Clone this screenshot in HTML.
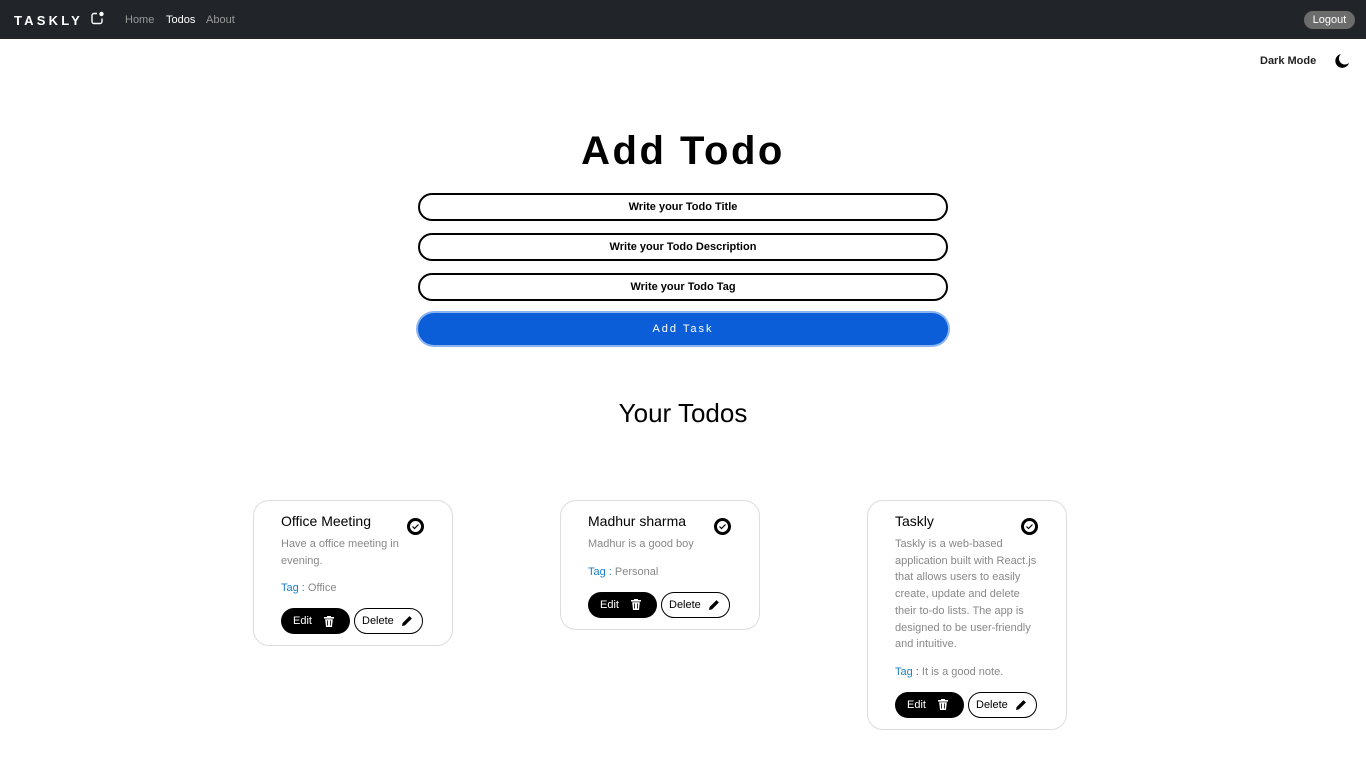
<!DOCTYPE html>
<html><head><meta charset="utf-8"><style>
*{box-sizing:border-box;margin:0;padding:0}
body{width:1366px;height:768px;background:#fff;font-family:"Liberation Sans",sans-serif;position:relative;overflow:hidden}
nav{position:absolute;left:0;top:0;width:1366px;height:39px;background:#212529}
.logo{position:absolute;left:14px;top:13px;color:#fff;font-size:13px;letter-spacing:3.2px;font-weight:bold}
.nl{position:absolute;top:14px;font-size:11px;color:#999}
.logout{position:absolute;left:1304px;top:11px;width:51px;height:18px;border-radius:9px;background:#6c6c6c;color:#fff;font-size:11px;text-align:center;line-height:18px}
.dm{position:absolute;left:1260px;top:55px;font-size:11px;font-weight:bold;color:#222}
h1{position:absolute;left:0;width:1366px;text-align:center;top:129px;font-size:40px;letter-spacing:2.5px;font-weight:bold;color:#000}
.inp{position:absolute;left:418px;width:530px;height:28px;border:2px solid #000;border-radius:14px;text-align:center;font-size:11px;font-weight:bold;line-height:25px}
.btn{position:absolute;left:418px;top:313px;width:530px;height:32px;border-radius:16px;background:#0b5ed7;box-shadow:0 0 0 2px #8ab4f0;color:#fff;font-size:11px;letter-spacing:2px;text-align:center;line-height:32px}
h2{position:absolute;left:0;width:1366px;text-align:center;top:398px;font-size:26px;font-weight:normal;color:#000}
.card{position:absolute;top:500px;width:200px;border:1px solid #ddd;border-radius:16px;padding:12px 20px 11px 27px}
.t{font-size:14px;line-height:16px;color:#000}
.d{margin-top:7px;font-size:11px;line-height:16.7px;color:#888}
.tag{margin-top:11px;font-size:11px;line-height:16px;color:#888}
.tag b{font-weight:normal;color:#1a7fc4}
.bt{margin-top:12px;display:flex;gap:4px}
.e,.x{height:26px;width:69px;border-radius:13px;font-size:11px;display:flex;align-items:center;padding-left:12px;gap:12px}
.e{background:#000;color:#fff}
.x{border:1px solid #000;color:#000;padding-left:7px;gap:7px}
.chk{position:absolute;right:28px;top:17px;width:17px;height:17px;border:3px solid #000;border-radius:50%}
</style></head><body>
<nav>
<div class="logo">TASKLY</div>
<svg style="position:absolute;left:90px;top:11px" width="15" height="15" viewBox="0 0 15 15"><path d="M7 2.5H4a2 2 0 0 0-2 2v6a2 2 0 0 0 2 2h6a2 2 0 0 0 2-2V7.5" fill="none" stroke="#fff" stroke-width="1.4"/><circle cx="11.5" cy="3" r="2.2" fill="#fff"/></svg>
<div class="nl" style="left:125px">Home</div>
<div class="nl" style="left:166px;color:#fff">Todos</div>
<div class="nl" style="left:206px">About</div>
<div class="logout">Logout</div>
</nav>
<div class="dm">Dark Mode</div>
<svg style="position:absolute;left:1334px;top:53px" width="16" height="16" viewBox="0 0 16 16"><path d="M7 1a7 7 0 1 0 8 9A6 6 0 0 1 7 1z" fill="#000"/></svg>
<h1>Add Todo</h1>
<div class="inp" style="top:193px">Write your Todo Title</div>
<div class="inp" style="top:233px">Write your Todo Description</div>
<div class="inp" style="top:273px">Write your Todo Tag</div>
<div class="btn">Add Task</div>
<h2>Your Todos</h2>

<div class="card" style="left:253px">
<div class="chk"><svg width="11" height="11" viewBox="0 0 11 11" style="display:block"><path d="M2.5 5.5l2 2 4-4" fill="none" stroke="#000" stroke-width="1.2"/></svg></div>
<div class="t">Office Meeting</div>
<div class="d">Have a office meeting in<br>evening.</div>
<div class="tag"><b>Tag :</b> Office</div>
<div class="bt"><div class="e">Edit <svg width="10" height="11" viewBox="0 0 10 11"><rect x="0" y="1" width="10" height="1.6" fill="#fff"/><rect x="3" y="0" width="4" height="1.5" fill="#fff"/><path d="M1.2 3.2h7.6L8 11H2z" fill="#fff"/><path d="M3.6 4.5v5M6.4 4.5v5" stroke="#000" stroke-width=".8"/></svg></div><div class="x">Delete <svg width="12" height="12" viewBox="0 0 12 12"><path d="M1 11l.6-3L8.5 1.1l2.4 2.4L4 10.4z" fill="#000"/></svg></div></div>
</div>

<div class="card" style="left:560px">
<div class="chk"><svg width="11" height="11" viewBox="0 0 11 11" style="display:block"><path d="M2.5 5.5l2 2 4-4" fill="none" stroke="#000" stroke-width="1.2"/></svg></div>
<div class="t">Madhur sharma</div>
<div class="d">Madhur is a good boy</div>
<div class="tag"><b>Tag :</b> Personal</div>
<div class="bt"><div class="e">Edit <svg width="10" height="11" viewBox="0 0 10 11"><rect x="0" y="1" width="10" height="1.6" fill="#fff"/><rect x="3" y="0" width="4" height="1.5" fill="#fff"/><path d="M1.2 3.2h7.6L8 11H2z" fill="#fff"/><path d="M3.6 4.5v5M6.4 4.5v5" stroke="#000" stroke-width=".8"/></svg></div><div class="x">Delete <svg width="12" height="12" viewBox="0 0 12 12"><path d="M1 11l.6-3L8.5 1.1l2.4 2.4L4 10.4z" fill="#000"/></svg></div></div>
</div>

<div class="card" style="left:867px">
<div class="chk"><svg width="11" height="11" viewBox="0 0 11 11" style="display:block"><path d="M2.5 5.5l2 2 4-4" fill="none" stroke="#000" stroke-width="1.2"/></svg></div>
<div class="t">Taskly</div>
<div class="d">Taskly is a web-based<br>application built with React.js<br>that allows users to easily<br>create, update and delete<br>their to-do lists. The app is<br>designed to be user-friendly<br>and intuitive.</div>
<div class="tag"><b>Tag :</b> It is a good note.</div>
<div class="bt"><div class="e">Edit <svg width="10" height="11" viewBox="0 0 10 11"><rect x="0" y="1" width="10" height="1.6" fill="#fff"/><rect x="3" y="0" width="4" height="1.5" fill="#fff"/><path d="M1.2 3.2h7.6L8 11H2z" fill="#fff"/><path d="M3.6 4.5v5M6.4 4.5v5" stroke="#000" stroke-width=".8"/></svg></div><div class="x">Delete <svg width="12" height="12" viewBox="0 0 12 12"><path d="M1 11l.6-3L8.5 1.1l2.4 2.4L4 10.4z" fill="#000"/></svg></div></div>
</div>
</body></html>
